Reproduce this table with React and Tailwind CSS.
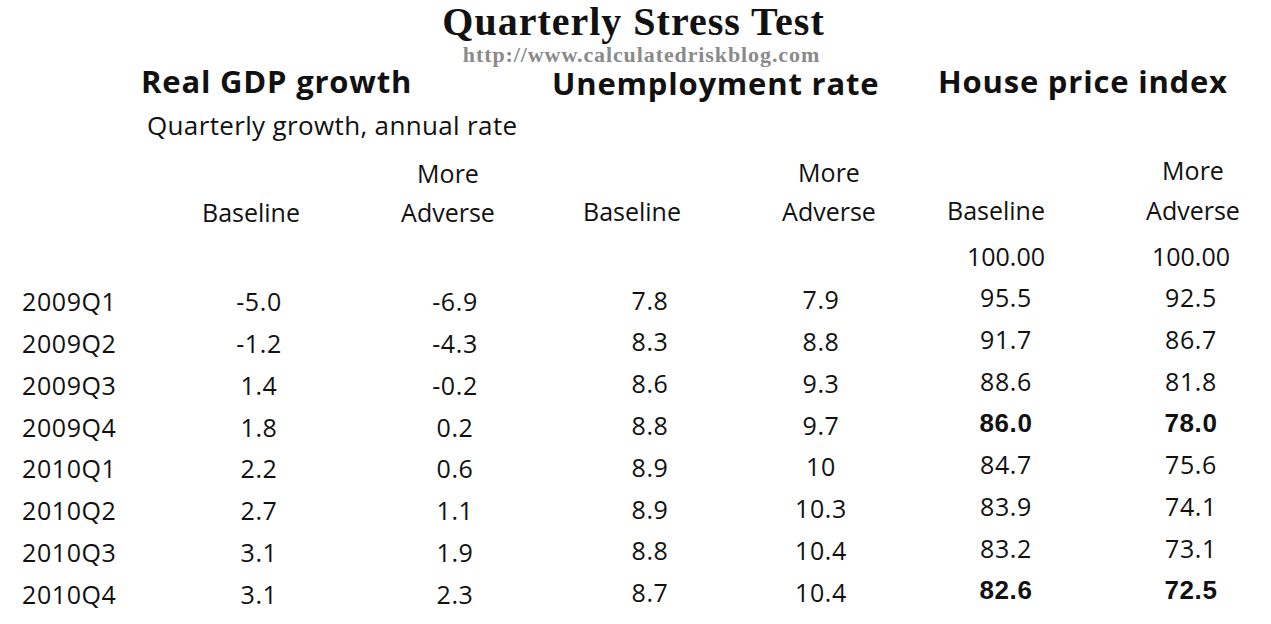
const sans = "font-['Open_Sans',sans-serif]";

// column boxes: each box is centred on the column's x position
const headCols = ['w-[182px]', 'w-[212px]', 'w-[156px]', 'w-[238px]', 'w-[96px]', 'w-[298px]'];
const dataCols = ['w-[198px]', 'w-[194px]', 'w-[196px]', 'w-[146px]', 'w-[224px]', 'w-[146px]'];
// the scan is a little skewed: right hand columns sit a few px higher
const lift = ['', '', 'pb-[3px]', 'pb-[4px]', 'pb-[8px]', 'pb-[8px]'];

const rows = [
  ['2009Q1', '-5.0', '-6.9', '7.8', '7.9', '95.5', '92.5'],
  ['2009Q2', '-1.2', '-4.3', '8.3', '8.8', '91.7', '86.7'],
  ['2009Q3', '1.4', '-0.2', '8.6', '9.3', '88.6', '81.8'],
  ['2009Q4', '1.8', '0.2', '8.8', '9.7', '86.0', '78.0', true],
  ['2010Q1', '2.2', '0.6', '8.9', '10', '84.7', '75.6'],
  ['2010Q2', '2.7', '1.1', '8.9', '10.3', '83.9', '74.1'],
  ['2010Q3', '3.1', '1.9', '8.8', '10.4', '83.2', '73.1'],
  ['2010Q4', '3.1', '2.3', '8.7', '10.4', '82.6', '72.5', true],
];

function HeadRow({ cells, height, lifts = [] }) {
  return (
    <div className={`flex items-center ${height}`}>
      <div className="w-[160px] shrink-0" />
      {cells.map((c, i) => (
        <div key={i} className={`${headCols[i]} shrink-0 flex justify-center whitespace-nowrap ${lifts[i] || ''}`}>
          {c}
        </div>
      ))}
    </div>
  );
}

export default function App() {
  return (
    <div className={`w-[1271px] h-[624px] overflow-hidden bg-white text-[#111] ${sans}`}>
      {/* Title */}
      <div className="text-center font-['Liberation_Serif',serif] font-bold text-[40px] leading-[44px] tracking-[1px] pr-[4px]">
        Quarterly Stress Test
      </div>
      <div className="mt-[2px] text-center font-['Liberation_Serif',serif] font-bold text-[22px] leading-[18px] tracking-[0.9px] text-[#8a8a8a] pl-[12px]">
        http://www.calculatedriskblog.com
      </div>

      {/* Section headers */}
      <div className="mt-[2px] flex font-bold text-[31px] leading-[30px] tracking-[0.8px] whitespace-nowrap">
        <div className="w-[552px] pl-[141px] shrink-0">Real GDP growth</div>
        <div className="w-[386px] pt-[2px] shrink-0">Unemployment rate</div>
        <div>House price index</div>
      </div>
      <div className="mt-[15px] pl-[147px] text-[26px] leading-[24px] tracking-[0.35px]">Quarterly growth, annual rate</div>

      {/* Column headers */}
      <div className="mt-[17px] text-[25px]">
        <HeadRow
          height="h-[40px]"
          cells={['', 'More', '', 'More', '', 'More']}
          lifts={['', '', '', 'pb-[3px]', '', 'pb-[6px]']}
        />
        <HeadRow
          height="h-[38px]"
          cells={['Baseline', 'Adverse', 'Baseline', 'Adverse', 'Baseline', 'Adverse']}
          lifts={['', '', 'pb-[2px]', 'pb-[2px]', 'pb-[5px]', 'pb-[5px]']}
        />
        <div className="flex items-center h-[49px]">
          <div className="w-[894px] shrink-0" />
          <div className="w-[224px] shrink-0 flex justify-center">100.00</div>
          <div className="w-[146px] shrink-0 flex justify-center">100.00</div>
        </div>

        {/* Data */}
        {rows.map((r) => (
          <div key={r[0]} className="flex items-center h-[41.8px] tracking-[0.6px]">
            <div className="w-[160px] shrink-0 pl-[22px]">{r[0]}</div>
            {r.slice(1, 7).map((v, i) => (
              <div
                key={i}
                className={`${dataCols[i]} shrink-0 flex justify-center ${lift[i]} ${
                  r[7] && i >= 4 ? "font-['Liberation_Sans',sans-serif] font-bold text-[26px]" : ''
                }`}
              >
                {v}
              </div>
            ))}
          </div>
        ))}
      </div>
    </div>
  );
}
